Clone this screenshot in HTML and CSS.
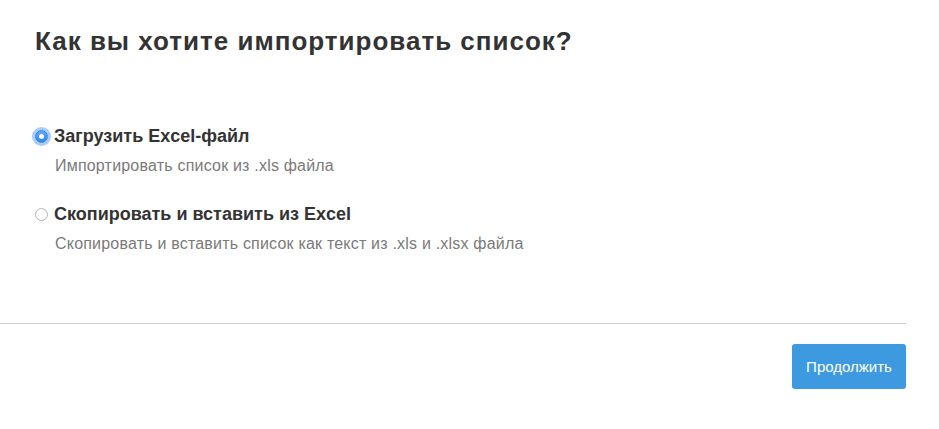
FILE: index.html
```html
<!DOCTYPE html>
<html lang="ru">
<head>
<meta charset="utf-8">
<title>Импорт списка</title>
<link rel="stylesheet" href="styles.css">
</head>
<body>
<div class="page">
  <div class="content">
    <h1 class="title">Как вы хотите импортировать список?</h1>
    <div class="options">
      <label class="option">
        <span class="option-row">
          <span class="radio radio-checked"><span class="dot"></span></span>
          <span class="option-label">Загрузить Excel-файл</span>
        </span>
        <span class="option-desc">Импортировать список из .xls файла</span>
      </label>
      <label class="option">
        <span class="option-row">
          <span class="radio"></span>
          <span class="option-label">Скопировать и вставить из Excel</span>
        </span>
        <span class="option-desc">Скопировать и вставить список как текст из .xls и .xlsx файла</span>
      </label>
    </div>
  </div>
  <div class="footer">
    <button class="btn-primary" type="button">Продолжить</button>
  </div>
</div>
</body>
</html>
```
FILE: styles.css
```css
html, body {
  margin: 0;
  padding: 0;
  background: #fff;
}
body {
  font-family: "Liberation Sans", Arial, Helvetica, sans-serif;
  color: #333;
}
.page {
  width: 906px;
}
.content {
  padding: 26px 0 69px 35px;
  border-bottom: 1px solid #cfcfcf;
}
.title {
  margin: 0;
  font-size: 26px;
  line-height: 30px;
  font-weight: bold;
  letter-spacing: 1px;
  color: #333;
}
.options {
  margin-top: 70px;
  display: flex;
  flex-direction: column;
  gap: 28px;
}
.option {
  display: flex;
  flex-direction: column;
  gap: 10px;
}
.option-row {
  display: flex;
  align-items: center;
  gap: 6px;
}
.option-label {
  font-size: 18px;
  line-height: 20px;
  font-weight: bold;
  color: #333;
}
.option-desc {
  padding-left: 20px;
  font-size: 16px;
  line-height: 20px;
  letter-spacing: 0.2px;
  color: #7a7a7a;
}
.radio {
  width: 13px;
  height: 13px;
  box-sizing: border-box;
  border-radius: 50%;
  border: 1px solid #b5b5b5;
  background: #fff;
  display: flex;
  align-items: center;
  justify-content: center;
  flex: none;
}
.radio-checked {
  border: 1px solid #2f7fe6;
  background: linear-gradient(#5eacf7, #2f86ee);
  box-shadow: 0 0 0 3px #a9cdf8;
}
.dot {
  width: 5px;
  height: 5px;
  border-radius: 50%;
  background: #fff;
}
.footer {
  display: flex;
  justify-content: flex-end;
  padding-top: 20px;
}
.btn-primary {
  width: 114px;
  height: 45px;
  border: none;
  border-radius: 3px;
  background: #3d9ae0;
  color: #fff;
  font-family: "Liberation Sans", Arial, Helvetica, sans-serif;
  font-size: 15px;
  padding: 0;
}
```
